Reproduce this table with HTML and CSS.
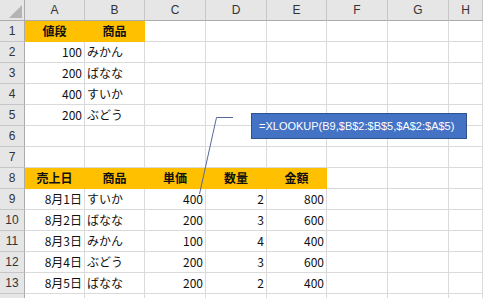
FILE: index.html
```html
<!DOCTYPE html>
<html lang="ja">
<head>
<meta charset="utf-8">
<title>XLOOKUP</title>
<link rel="stylesheet" href="styles.css">
</head>
<body>
<div class="sheet">
  <div class="corner"><svg class="tri" width="25" height="21" viewBox="0 0 25 21"><polygon points="22,5 22,18 9,18" fill="#b4b4b4"/></svg></div>
  <div class="ch">A</div><div class="ch">B</div><div class="ch">C</div><div class="ch">D</div><div class="ch">E</div><div class="ch">F</div><div class="ch">G</div><div class="ch">H</div>

  <div class="rh">1</div><div class="c h">値段</div><div class="c h">商品</div><div class="c"></div><div class="c"></div><div class="c"></div><div class="c"></div><div class="c"></div><div class="c"></div>
  <div class="rh">2</div><div class="c n">100</div><div class="c">みかん</div><div class="c"></div><div class="c"></div><div class="c"></div><div class="c"></div><div class="c"></div><div class="c"></div>
  <div class="rh">3</div><div class="c n">200</div><div class="c">ばなな</div><div class="c"></div><div class="c"></div><div class="c"></div><div class="c"></div><div class="c"></div><div class="c"></div>
  <div class="rh">4</div><div class="c n">400</div><div class="c">すいか</div><div class="c"></div><div class="c"></div><div class="c"></div><div class="c"></div><div class="c"></div><div class="c"></div>
  <div class="rh">5</div><div class="c n">200</div><div class="c">ぶどう</div><div class="c"></div><div class="c"></div><div class="c"></div><div class="c"></div><div class="c"></div><div class="c"></div>
  <div class="rh">6</div><div class="c"></div><div class="c"></div><div class="c"></div><div class="c"></div><div class="c"></div><div class="c"></div><div class="c"></div><div class="c"></div>
  <div class="rh">7</div><div class="c"></div><div class="c"></div><div class="c"></div><div class="c"></div><div class="c"></div><div class="c"></div><div class="c"></div><div class="c"></div>
  <div class="rh">8</div><div class="c h">売上日</div><div class="c h">商品</div><div class="c h">単価</div><div class="c h">数量</div><div class="c h">金額</div><div class="c"></div><div class="c"></div><div class="c"></div>
  <div class="rh">9</div><div class="c n">8月1日</div><div class="c">すいか</div><div class="c n">400</div><div class="c n">2</div><div class="c n">800</div><div class="c"></div><div class="c"></div><div class="c"></div>
  <div class="rh">10</div><div class="c n">8月2日</div><div class="c">ばなな</div><div class="c n">200</div><div class="c n">3</div><div class="c n">600</div><div class="c"></div><div class="c"></div><div class="c"></div>
  <div class="rh">11</div><div class="c n">8月3日</div><div class="c">みかん</div><div class="c n">100</div><div class="c n">4</div><div class="c n">400</div><div class="c"></div><div class="c"></div><div class="c"></div>
  <div class="rh">12</div><div class="c n">8月4日</div><div class="c">ぶどう</div><div class="c n">200</div><div class="c n">3</div><div class="c n">600</div><div class="c"></div><div class="c"></div><div class="c"></div>
  <div class="rh">13</div><div class="c n">8月5日</div><div class="c">ばなな</div><div class="c n">200</div><div class="c n">2</div><div class="c n">400</div><div class="c"></div><div class="c"></div><div class="c"></div>
  <div class="rh"></div><div class="c"></div><div class="c"></div><div class="c"></div><div class="c"></div><div class="c"></div><div class="c"></div><div class="c"></div><div class="c"></div>
</div>

<svg class="leader" width="483" height="298" viewBox="0 0 483 298">
  <polyline points="199.5,194 216.5,117.5 233,117.5" fill="none" stroke="#56699a" stroke-width="1"/>
</svg>
<div class="callout">=XLOOKUP(B9,$B$2:$B$5,$A$2:$A$5)</div>
</body>
</html>
```

FILE: styles.css
```css
* {
  box-sizing: border-box;
}

html, body {
  margin: 0;
  padding: 0;
  background: #ffffff;
}

body {
  position: relative;
  width: 483px;
  height: 298px;
  overflow: hidden;
}

.sheet {
  display: grid;
  grid-template-columns: 25px 60px 60px 61px 61px 60px 61px 61px 1fr;
  grid-auto-rows: 21px;
  font-family: "Noto Sans CJK JP", "Noto Sans", sans-serif;
  font-size: 12px;
  color: #111111;
}

.corner {
  background: #e6e6e6;
  border-right: 1px solid #ababab;
  border-bottom: 1px solid #ababab;
  position: relative;
}

.tri {
  position: absolute;
  left: 0;
  top: 0;
}

.ch {
  background: #e6e6e6;
  border-right: 1px solid #c6c6c6;
  border-bottom: 1px solid #ababab;
  text-align: center;
  font-family: "Liberation Sans", Arial, sans-serif;
  font-size: 12px;
  line-height: 20px;
  color: #333333;
}

.rh {
  background: #e6e6e6;
  border-right: 1px solid #ababab;
  border-bottom: 1px solid #c6c6c6;
  text-align: center;
  font-family: "Liberation Sans", Arial, sans-serif;
  font-size: 12px;
  line-height: 20px;
  color: #333333;
}

.c {
  border-right: 1px solid #dadada;
  border-bottom: 1px solid #dadada;
  line-height: 20px;
  padding: 0 2px 0 2px;
  white-space: nowrap;
  overflow: hidden;
}

.n {
  text-align: right;
}

.h {
  background: #ffc000;
  border-color: #ffc000;
  font-weight: 700;
  text-align: center;
}

.leader {
  position: absolute;
  left: 0;
  top: 0;
  pointer-events: none;
}

.callout {
  position: absolute;
  left: 251px;
  top: 113px;
  width: 216px;
  height: 26px;
  background: #4472c4;
  border: 1px solid #2f528f;
  color: #ffffff;
  font-family: "Liberation Sans", Arial, sans-serif;
  font-size: 11px;
  line-height: 24px;
  padding-left: 7px;
  white-space: nowrap;
}
```
